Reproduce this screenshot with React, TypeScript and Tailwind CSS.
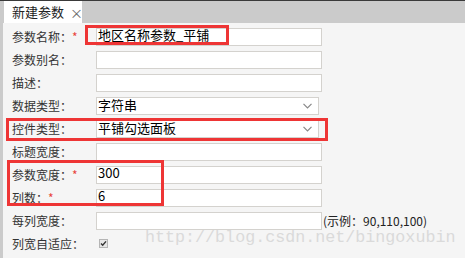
import React from "react";

type Row = {
  label: string;
  required?: boolean;
  value?: string;
  kind: "input" | "select" | "check";
  hint?: string;
};

const rows: Row[] = [
  { label: "参数名称：", required: true, value: "地区名称参数_平铺", kind: "input" },
  { label: "参数别名：", kind: "input" },
  { label: "描述：", kind: "input" },
  { label: "数据类型：", value: "字符串", kind: "select" },
  { label: "控件类型：", value: "平铺勾选面板", kind: "select" },
  { label: "标题宽度：", kind: "input" },
  { label: "参数宽度：", required: true, value: "300", kind: "input" },
  { label: "列数：", required: true, value: "6", kind: "input" },
  { label: "每列宽度：", kind: "input", hint: "(示例：90,110,100)" },
  { label: "列宽自适应：", kind: "check" },
];

function Chevron() {
  return (
    <svg width="9" height="6" viewBox="0 0 9 6" className="shrink-0">
      <path d="M0.5 0.8 L4.5 4.8 L8.5 0.8" fill="none" stroke="#888" strokeWidth="1.2" />
    </svg>
  );
}

function Field({ row }: { row: Row }) {
  if (row.kind === "check") {
    return (
      <div className="flex h-full items-center pl-[3px]">
        <svg width="9" height="9" viewBox="0 0 9 9">
          <rect x="0.5" y="0.5" width="8" height="8" fill="#e6e6e6" stroke="#b5b5b5" />
          <path d="M2 4.6 L3.7 6.3 L7 2.4" fill="none" stroke="#333" strokeWidth="1.4" />
        </svg>
      </div>
    );
  }
  if (row.kind === "select") {
    return (
      <div className="flex h-[18px] w-[223px] items-center justify-between border border-[#d4d2ce] bg-white pl-[1px] pr-[6px] text-[13px] leading-[16px] text-black">
        <span className="relative -top-[1px] whitespace-nowrap">{row.value}</span>
        <Chevron />
      </div>
    );
  }
  return (
    <div className="flex items-center">
      <div className="flex h-[18px] w-[226px] items-center whitespace-nowrap border border-[#d4d2ce] bg-white pl-[1px] text-[13px] leading-[16px] text-black">
        <span className="relative -top-[1.5px]">{row.value}</span>
      </div>
      {row.hint && <span className="ml-[1px] whitespace-nowrap text-[12px] text-[#222]">{row.hint}</span>}
    </div>
  );
}

export default function App() {
  return (
    <div
      className="relative h-[258px] w-[465px] overflow-hidden bg-[#cbcbcb]"
      style={{ fontFamily: '"Noto Sans CJK SC", "Noto Sans", sans-serif' }}
    >
      <div className="h-[1px] bg-[#3a3a3a]" />
      <div className="flex h-[22px] items-end pl-[4px]">
        <div className="flex h-[22px] w-[78px] items-center gap-[6px] whitespace-nowrap bg-white pl-[8px] text-[13px] text-[#222]">
          <span>新建参数</span>
          <span className="text-[13px] leading-none text-[#666]">×</span>
        </div>
      </div>
      <div className="ml-[3px] h-[235px] bg-[#f5f5f5] pl-[9px] pt-[2px]">
        {rows.map((row) => (
          <div key={row.label} className="flex h-[23px] items-center">
            <div className="w-[84px] shrink-0 whitespace-nowrap text-[12px] text-[#333]">
              {row.label}
              {row.required && <span className="text-[#e8443a]">*</span>}
            </div>
            <Field row={row} />
          </div>
        ))}
      </div>

      {/* annotation boxes */}
      <div className="absolute left-[85px] top-[25px] h-[20px] w-[144px] border-[3px] border-[#ee3535]" />
      <div className="absolute left-[6px] top-[118px] h-[23px] w-[322px] border-[3px] border-[#ee3535]" />
      <div className="absolute left-[7px] top-[160px] h-[46px] w-[157px] border-[3px] border-[#ee3535]" />

      {/* watermark */}
      <div
        className="pointer-events-none absolute left-[145px] top-[230px] text-[16.7px] leading-none text-[#dadada]"
        style={{ fontFamily: '"Liberation Mono", monospace' }}
      >
        http://blog.csdn.net/bingoxubin
      </div>
    </div>
  );
}
